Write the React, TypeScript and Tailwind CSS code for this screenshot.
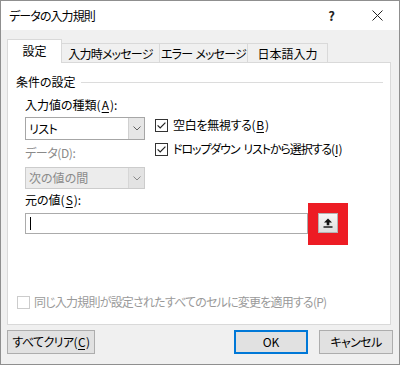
import React from "react";

const FONT = "font-['Noto_Sans_CJK_JP','Noto_Sans',sans-serif] [font-feature-settings:'palt']";

function Check({ checked, disabled }: { checked?: boolean; disabled?: boolean }) {
  return (
    <span
      className={
        "w-[13px] h-[13px] shrink-0 border bg-white flex items-center justify-center " +
        (disabled ? "border-[#cccccc]" : "border-[#333333]")
      }
    >
      {checked && (
        <svg width="11" height="11" viewBox="0 0 11 11">
          <path d="M1.6 5.4 L4.2 8 L9.4 2.6" stroke="#222" strokeWidth="1.2" fill="none" />
        </svg>
      )}
    </span>
  );
}

function Chevron({ color }: { color: string }) {
  return (
    <svg width="8" height="5" viewBox="0 0 8 5">
      <path d="M0.5 0.5 L4 4 L7.5 0.5" stroke={color} strokeWidth="1" fill="none" />
    </svg>
  );
}

function U({ children }: { children: React.ReactNode }) {
  return <span className="underline underline-offset-2 px-[1px]">{children}</span>;
}

export default function App() {
  return (
    <div
      className={
        "w-[400px] h-[365px] flex flex-col bg-[#f0f0f0] border border-[#8f8f8f] text-[12px] leading-[16px] text-black whitespace-nowrap " +
        FONT
      }
    >
      {/* Title bar */}
      <div className="h-[29px] shrink-0 bg-white flex items-center pl-[8px]">
        <span className="text-[12px] tracking-[-0.9px]">データの入力規則</span>
        <span className="ml-auto mr-[37px] text-[13px] font-bold text-[#222]">?</span>
        <svg className="mr-[16px]" width="11" height="11" viewBox="0 0 11 11">
          <path d="M0.5 0.5 L10.5 10.5 M10.5 0.5 L0.5 10.5" stroke="#222" strokeWidth="1" />
        </svg>
      </div>

      <div className="flex flex-col px-[6px] pt-[9px]">
        {/* Tabs */}
        <div className="flex items-end h-[24px] relative z-10">
          <div className="w-[55px] h-[24px] bg-white border border-b-0 border-[#d9d9d9] flex items-center justify-center pb-[2px]">
            設定
          </div>
          <div className="w-[98px] h-[20px] border border-l-0 border-b-0 border-[#d9d9d9] flex items-center justify-center tracking-[-0.8px]">
            入力時メッセージ
          </div>
          <div className="w-[88px] h-[20px] border border-l-0 border-b-0 border-[#d9d9d9] flex items-center justify-center tracking-[-0.8px]">
            <span>エラー</span>
            <span className="ml-[3px]">メッセージ</span>
          </div>
          <div className="w-[80px] h-[20px] border border-l-0 border-b-0 border-[#d9d9d9] flex items-center justify-center">
            日本語入力
          </div>
        </div>

        {/* Panel */}
        <div className="-mt-px h-[263px] w-[384px] bg-white border border-[#d9d9d9] flex flex-col pt-[11px]">
          <div className="flex items-center h-[16px] pl-[8px] pr-[7px]">
            <span>条件の設定</span>
            <div className="flex-1 h-px bg-[#dcdcdc] ml-[5px]" />
          </div>

          <div className="flex flex-col pl-[17px] pt-[7px]">
            <div className="flex">
              <div className="flex flex-col w-[120px]">
                <div className="h-[16px]">
                  入力値の種類(<U>A</U>):
                </div>
                <div className="mt-[4px] h-[23px] flex border border-[#a6a6a6] bg-white">
                  <div className="flex-1 flex items-center pl-[3px] tracking-[-0.5px]">リスト</div>
                  <div className="w-[16px] bg-[#e6e6e6] border-l border-[#d0d0d0] flex items-center justify-center">
                    <Chevron color="#606060" />
                  </div>
                </div>
                <div className="mt-[5px] h-[16px] text-[#8a8a8a] tracking-[-0.4px]">データ(D):</div>
                <div className="mt-[6px] h-[22px] flex border border-[#cccccc] bg-[#ececec]">
                  <div className="flex-1 flex items-center pl-[3px] text-[#8a8a8a]">次の値の間</div>
                  <div className="w-[16px] bg-[#e3e3e3] border-l border-[#d6d6d6] flex items-center justify-center">
                    <Chevron color="#8a8a8a" />
                  </div>
                </div>
              </div>
              <div className="flex flex-col ml-[10px] pt-[20px]">
                <div className="flex items-center h-[16px] gap-[5px]">
                  <Check checked />
                  <span className="tracking-[-0.3px]">
                    空白を無視する(<U>B</U>)
                  </span>
                </div>
                <div className="flex items-center h-[16px] gap-[5px] mt-[8px]">
                  <Check checked />
                  <span className="tracking-[-1.1px]">
                    ドロップダウン
                    <span className="ml-[4px]">
                      リストから選択する(<U>I</U>)
                    </span>
                  </span>
                </div>
              </div>
            </div>

            <div className="mt-[3px] h-[16px]">
              元の値(<U>S</U>):
            </div>
            <div className="mt-[5px] flex items-start">
              <div className="w-[283px] h-[21px] border border-[#ababab] bg-white flex items-center pl-[4px]">
                <div className="w-px h-[13px] bg-black" />
              </div>
              <div className="-mt-[10px] w-[40px] h-[42px] bg-[#ed1c24] flex items-start justify-center pt-[10px]">
                <div className="w-[20px] h-[20px] border border-[#b4b4b4] bg-gradient-to-b from-[#f7f7f7] to-[#dedede] flex items-center justify-center">
                  <svg width="10" height="10" viewBox="0 0 10 10">
                    <path d="M5 0.5 L9 4.6 L6.3 4.6 L6.3 7.2 L3.7 7.2 L3.7 4.6 L1 4.6 Z" fill="#111" />
                    <rect x="0.5" y="8.3" width="9" height="1.4" fill="#111" />
                  </svg>
                </div>
              </div>
            </div>
          </div>

          <div className="mt-[49px] pl-[9px] flex items-center h-[16px] gap-[4px] text-[#9a9a9a]">
            <Check disabled />
            <span className="tracking-[-0.8px]">同じ入力規則が設定されたすべてのセルに変更を適用する(P)</span>
          </div>
        </div>

        {/* Buttons */}
        <div className="mt-[5px] flex items-center">
          <div className="w-[88px] h-[24px] bg-[#e1e1e1] border border-[#adadad] flex items-center justify-center tracking-[-0.6px]">
            すべてクリア(<U>C</U>)
          </div>
          <div className="ml-auto w-[74px] h-[24px] bg-[#e1e1e1] border-2 border-[#0078d7] flex items-center justify-center">
            OK
          </div>
          <div className="ml-[11px] w-[74px] h-[24px] bg-[#e1e1e1] border border-[#adadad] flex items-center justify-center tracking-[-0.6px]">
            キャンセル
          </div>
        </div>
      </div>
    </div>
  );
}
